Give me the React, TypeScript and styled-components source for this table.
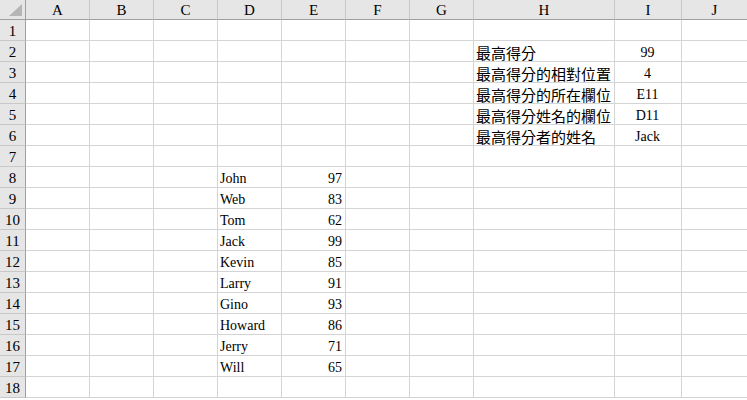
import styled, { createGlobalStyle } from 'styled-components'
import { FC } from 'react'

type TAlign = 'left' | 'center' | 'right'

type TCell = {
  text: string
  align?: TAlign
  cjk?: boolean
}

const COLUMNS = [
  { name: 'A', width: 64 },
  { name: 'B', width: 64 },
  { name: 'C', width: 64 },
  { name: 'D', width: 64 },
  { name: 'E', width: 64 },
  { name: 'F', width: 64 },
  { name: 'G', width: 64 },
  { name: 'H', width: 141 },
  { name: 'I', width: 67 },
  { name: 'J', width: 66 },
]

const scores: [string, number][] = [
  ['John', 97],
  ['Web', 83],
  ['Tom', 62],
  ['Jack', 99],
  ['Kevin', 85],
  ['Larry', 91],
  ['Gino', 93],
  ['Howard', 86],
  ['Jerry', 71],
  ['Will', 65],
]

const summary: [string, string][] = [
  ['最高得分', '99'],
  ['最高得分的相對位置', '4'],
  ['最高得分的所在欄位', 'E11'],
  ['最高得分姓名的欄位', 'D11'],
  ['最高得分者的姓名', 'Jack'],
]

const buildSheet = () => {
  const sheet: Record<number, Record<string, TCell>> = {}
  const put = (row: number, col: string, cell: TCell) => {
    sheet[row] = sheet[row] || {}
    sheet[row][col] = cell
  }
  scores.forEach(([name, score], i) => {
    put(8 + i, 'D', { text: name })
    put(8 + i, 'E', { text: String(score), align: 'right' })
  })
  summary.forEach(([label, value], i) => {
    put(2 + i, 'H', { text: label, cjk: true })
    put(2 + i, 'I', { text: value, align: 'center' })
  })
  return sheet
}

const ROW_COUNT = 18

const GlobalStyle = createGlobalStyle`
  html, body {
    margin: 0;
    padding: 0;
    background: #ffffff;
    overflow: hidden;
  }
`

export default function App() {
  const sheet = buildSheet()
  const rows = Array.from({ length: ROW_COUNT }, (_, i) => i + 1)
  return (
    <>
      <GlobalStyle />
      <Sheet $columns={COLUMNS.map((c) => c.width)}>
        <Corner>
          <CornerMark />
        </Corner>
        {COLUMNS.map((c) => (
          <ColumnHeader key={c.name}>{c.name}</ColumnHeader>
        ))}
        {rows.map((r) => (
          <SheetRow key={r} index={r} cells={sheet[r] || {}} />
        ))}
      </Sheet>
    </>
  )
}

type TRowProps = {
  index: number
  cells: Record<string, TCell>
}

const SheetRow: FC<TRowProps> = (props: TRowProps) => (
  <>
    <RowHeader>{props.index}</RowHeader>
    {COLUMNS.map((c) => {
      const cell = props.cells[c.name]
      return (
        <Cell key={c.name} $align={cell?.align || 'left'} $cjk={!!cell?.cjk}>
          {cell?.text}
        </Cell>
      )
    })}
  </>
)

const Sheet = styled.div<{ $columns: number[] }>`
  display: grid;
  grid-template-columns: 26px ${(p) => p.$columns.map((w) => `${w}px`).join(' ')};
  grid-template-rows: 20px repeat(${ROW_COUNT}, 21px);
  width: 747px;
  height: 400px;
  overflow: hidden;
  font-family: 'Liberation Serif', 'Noto Sans CJK TC', serif;
  font-size: 14px;
  color: #000000;
`
const Corner = styled.div`
  position: relative;
  box-sizing: border-box;
  background: #e6e6e6;
  border-right: 1px solid #9f9f9f;
  border-bottom: 1px solid #9f9f9f;
`
const CornerMark = styled.div`
  position: absolute;
  right: 3px;
  bottom: 3px;
  width: 13px;
  height: 12px;
  background: #b5b5b5;
  clip-path: polygon(100% 0, 100% 100%, 0 100%);
`
const ColumnHeader = styled.div`
  box-sizing: border-box;
  display: flex;
  align-items: center;
  justify-content: center;
  background: #e6e6e6;
  border-right: 1px solid #c8c8c8;
  border-bottom: 1px solid #9f9f9f;
  padding-top: 2px;
  font-size: 15px;
`
const RowHeader = styled.div`
  box-sizing: border-box;
  display: flex;
  align-items: center;
  justify-content: center;
  background: #e6e6e6;
  border-right: 1px solid #9f9f9f;
  border-bottom: 1px solid #c8c8c8;
  padding-top: 3px;
  font-size: 15px;
`
const Cell = styled.div<{ $align: TAlign; $cjk: boolean }>`
  box-sizing: border-box;
  display: flex;
  align-items: center;
  justify-content: ${(p) =>
    p.$align === 'right' ? 'flex-end' : p.$align === 'center' ? 'center' : 'flex-start'};
  padding: ${(p) => (p.$cjk ? '2px' : '4px')} 3px 0 2px;
  border-right: 1px solid #d4d4d4;
  border-bottom: 1px solid #d4d4d4;
  white-space: nowrap;
  font-family: ${(p) =>
    p.$cjk ? "'Noto Sans CJK TC', sans-serif" : "'Liberation Serif', serif"};
  font-size: ${(p) => (p.$cjk ? '15px' : '14px')};
`
